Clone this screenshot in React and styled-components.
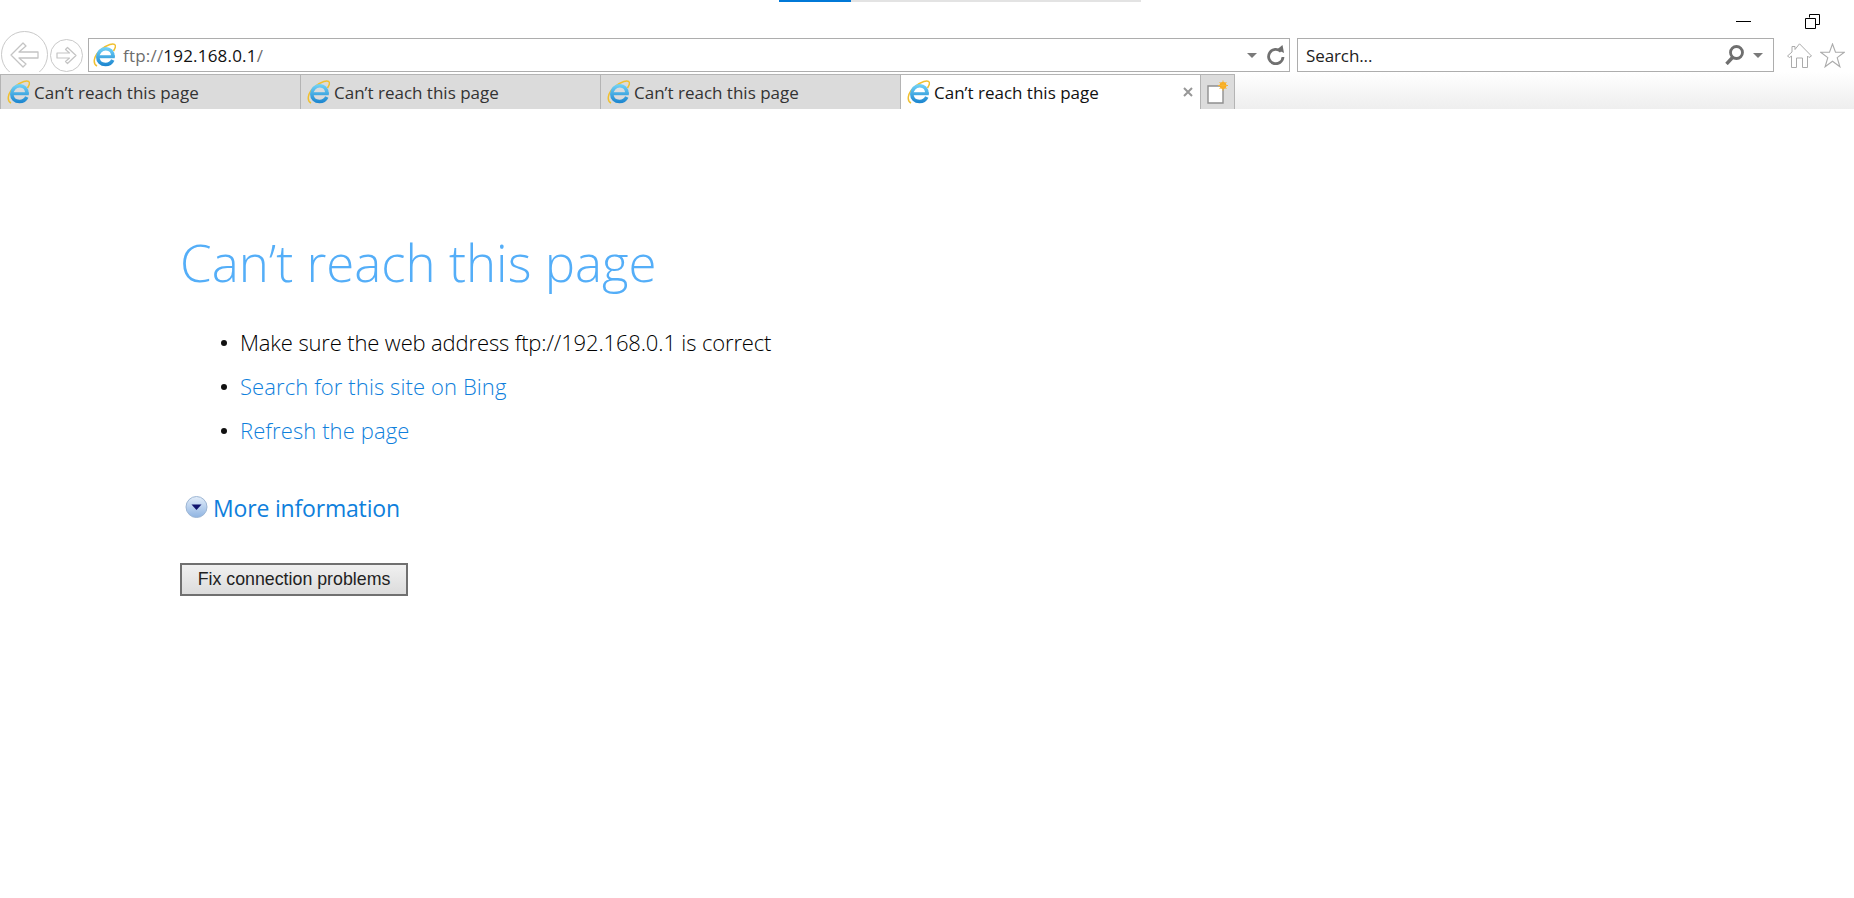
import React from "react";
import styled, { createGlobalStyle } from "styled-components";

const Global = createGlobalStyle`
  html, body { margin: 0; padding: 0; background: #fff; }
  body { font-family: "Open Sans", "Noto Sans", sans-serif; overflow: hidden; }
`;
const Page = styled.div`width: 1854px; height: 898px; display: flex; flex-direction: column; background: #fff;`;
const Progress = styled.div`height: 2px; margin-left: 779px; width: 362px; background: #e3e3e3; flex: none;`;
const ProgressFill = styled.div`height: 100%; width: 72px; background: #0078d7;`;
const WindowBar = styled.div`height: 36px; flex: none; display: flex; justify-content: flex-end; align-items: flex-start; padding-right: 34px; gap: 54px; box-sizing: border-box; padding-top: 12px;`;
const WinButton = styled.svg`width: 15px; height: 15px; display: block; fill: none; stroke: #000; stroke-width: 1;`;
const NavRow = styled.div`height: 34px; flex: none; display: flex; align-items: center; position: relative; z-index: 0;`;
const RoundButton = styled.svg`flex: none; display: block; fill: none;`;
const BackSlot = styled.div`width: 50px; height: 34px; flex: none; display: flex; padding-left: 1px; box-sizing: border-box; align-items: flex-start; overflow: visible;`;
const BackIcon = styled(RoundButton)`margin-top: -7px;`;
const ForwardSlot = styled.div`width: 38px; flex: none; display: flex;`;
const Field = styled.div`
  box-sizing: border-box; height: 34px; flex: none; width: ${p => p.$w}px; margin-right: ${p => p.$mr || 0}px;
  border: 1px solid #adadad; background: #fff; display: flex; align-items: center; padding: 0 ${p => p.$pr || 0}px 0 ${p => p.$pl}px;
`;
const Address = styled.div`font-size: 17px; letter-spacing: 0.2px; color: #6d6d6d; margin-left: 7px; flex: 1; white-space: nowrap;`;
const Host = styled.span`color: #111;`;
const SearchText = styled.div`font-size: 17px; letter-spacing: -0.1px; color: #222; flex: 1;`;
const Caret = styled.span`width: 0; height: 0; border-left: 5px solid transparent; border-right: 5px solid transparent; border-top: 5px solid #7a7a7a; flex: none;`;
const ToolIcon = styled.svg`flex: none; display: block; fill: none;`;
const TabRow = styled.div`height: 37px; flex: none; display: flex; align-items: stretch; position: relative; z-index: 1; background: linear-gradient(#fff, #eeeeee); box-sizing: border-box; padding-top: 2px;`;
const Tab = styled.div`
  box-sizing: border-box; width: 300px; flex: none; display: flex; align-items: center; padding-left: 6px;
  border-top: 1px solid #b4b4b4; border-left: 1px solid #b4b4b4;
  background: ${p => (p.$active ? "#fff" : "#dbdbdb")};
  color: ${p => (p.$active ? "#111" : "#333")};
  position: relative;
`;
const TabTitle = styled.span`font-size: 17px; margin-left: 4px; white-space: nowrap; flex: 1;`;
const Close = styled.svg`width: 10px; height: 10px; margin: 0 7px 0 0; flex: none; stroke: #979797; stroke-width: 2; fill: none;`;
const NewTab = styled.div`
  box-sizing: border-box; width: 35px; flex: none; background: #dcdcdc; border: 1px solid #b4b4b4; border-bottom: 0;
  display: flex; align-items: center; justify-content: center;
`;
const Main = styled.main`flex: 1; padding: 120px 0 0 180px; box-sizing: border-box;`;
const Title = styled.h1`margin: 0; font-size: 51px; font-weight: 300; line-height: 66px; letter-spacing: 0; color: #54aef8;`;
const Tips = styled.ul`list-style: none; margin: 25px 0 0; padding: 0 0 0 60px;`;
const Tip = styled.li`
  font-size: 22px; font-weight: 300; line-height: 44px; height: 44px; letter-spacing: ${p => (p.$link ? "0.1px" : "-0.14px")}; color: ${p => (p.$link ? "#0f7fdc" : "#000")};
  position: relative;
  &::before { content: ""; position: absolute; left: -19px; top: 20px; width: 6px; height: 6px; border-radius: 50%; background: #111; }
`;
const More = styled.div`display: flex; align-items: center; margin: 34px 0 0 5px; height: 44px; gap: 5px;`;
const MoreText = styled.span`font-size: 23px; font-weight: 400; letter-spacing: -0.18px; color: #0f7fdc;`;
const MoreIcon = styled.svg`width: 23px; height: 24px; flex: none; margin-top: -3px;`;
const FixButton = styled.button`
  display: block; box-sizing: border-box; width: 228px; height: 33px; margin-top: 33px; padding: 0;
  border: 2px solid #707070; border-radius: 0; background: linear-gradient(#f0f0f0, #dcdcdc);
  font-family: "Liberation Sans", Arial, sans-serif; font-size: 17.8px; color: #222;
`;

function IeIcon({ id }) {
  return (
    <svg width="23" height="24" viewBox="0 0 23 24" style={{ flex: "none", display: "block" }}>
      <defs>
        <linearGradient id={id} gradientUnits="userSpaceOnUse" x1="0" y1="5" x2="0" y2="23">
          <stop offset="0" stopColor="#6fd0f6" />
          <stop offset="1" stopColor="#1b85cf" />
        </linearGradient>
      </defs>
      <path d="M4 23C-0.5 20.5 0.5 13 7.5 7C14 1.5 21 -0.5 22.3 2.3C23 4 21.8 6 20.5 8" fill="none" stroke="#f0c030" strokeWidth="1.5" />
      <path d="M20 14C20 8.5 16.8 5.8 12.8 5.8C8 5.8 4.8 9.5 4.8 14C4.8 18.5 8 21.5 12.5 21.5C16 21.5 18.5 19.8 19.8 17" fill="none" stroke={`url(#${id})`} strokeWidth="3.6" />
      <path d="M5 12.2H21.8V15.2H5Z" fill={`url(#${id})`} />
    </svg>
  );
}

const tabs = [0, 1, 2, 3];

export default function App() {
  return (
    <Page>
      <Global />
      <Progress><ProgressFill /></Progress>
      <WindowBar>
        <WinButton viewBox="0 0 15 15"><path d="M0 7.5H15" /></WinButton>
        <WinButton viewBox="0 0 15 15"><path d="M4.5 3.5V.5H14.5V10.5H10.5M.5 4.5H10.5V14.5H.5Z" /></WinButton>
      </WindowBar>
      <NavRow>
        <BackSlot>
          <BackIcon width="47" height="47" viewBox="0 0 47 47">
            <circle cx="23.5" cy="23.5" r="23" fill="#fff" stroke="#c9c9c9" />
            <path d="M10 24L22 12L25 15L18 21H37V27H18L25 33L22 36Z" stroke="#c4c4c4" strokeWidth="1.3" strokeLinejoin="round" />
          </BackIcon>
        </BackSlot>
        <ForwardSlot>
          <RoundButton width="33" height="33" viewBox="0 0 33 33">
            <circle cx="16.5" cy="16.5" r="16" fill="#fff" stroke="#c9c9c9" />
            <path d="M26 16.5L17.5 8.5L15.5 10.5L19.5 14H7V19H19.5L15.5 22.5L17.5 24.5Z" stroke="#c4c4c4" strokeWidth="1.2" strokeLinejoin="round" />
          </RoundButton>
        </ForwardSlot>
        <Field $w={1202} $mr={7} $pl={4} $pr={4}>
          <IeIcon id="ie-addr" />
          <Address>ftp://<Host>192.168.0.1</Host>/</Address>
          <Caret />
          <ToolIcon width="18" height="20" viewBox="0 0 18 20" style={{ marginLeft: 10 }}>
            <path d="M14 6.5A7.2 7.2 0 1 0 16 12" stroke="#707070" strokeWidth="2.8" />
            <path d="M10 4.5L15.5 0L17 8Z" fill="#707070" />
          </ToolIcon>
        </Field>
        <Field $w={477} $mr={13} $pl={8} $pr={10}>
          <SearchText>Search...</SearchText>
          <ToolIcon width="19" height="20" viewBox="0 0 19 20" style={{ marginRight: 9 }}>
            <circle cx="11.5" cy="7.5" r="6" stroke="#6f6f6f" strokeWidth="2.8" />
            <path d="M7.5 12.5L1.5 19" stroke="#6f6f6f" strokeWidth="3.4" />
          </ToolIcon>
          <Caret />
        </Field>
        <ToolIcon width="25" height="25" viewBox="0 0 25 25" style={{ marginRight: 8 }}>
          <path d="M.5 13L5 9V3.5H8V6.5L12.5 .8L24.5 13L22 14.5L20.5 13V24.5H15.5V15H9.5V24.5H4.5V13L2.5 14.5Z" stroke="#ababab" strokeWidth="1" />
        </ToolIcon>
        <ToolIcon width="25" height="25" viewBox="0 0 25 25">
          <path d="M12.5 1L15.5 9.3H24.3L17.2 14.6L19.9 23.8L12.5 18.3L5.1 23.8L7.8 14.6L.7 9.3H9.5Z" stroke="#ababab" strokeWidth="1.1" />
        </ToolIcon>
      </NavRow>
      <TabRow>
        {tabs.map(i => (
          <Tab key={i} $active={i === 3}>
            <IeIcon id={`ie-tab-${i}`} />
            <TabTitle>Can’t reach this page</TabTitle>
            {i === 3 && <Close viewBox="0 0 10 10"><path d="M1 1L9 9M9 1L1 9" /></Close>}
          </Tab>
        ))}
        <NewTab>
          <svg width="21" height="24" viewBox="0 0 21 24">
            <path d="M1 6H16V23H1Z" fill="#fff" stroke="#8f8f8f" strokeWidth="1.4" />
            <circle cx="16" cy="5.5" r="3.4" fill="#f7a81b" />
            <path d="M16 .5V10.5M11 5.5H21M12.5 2L19.5 9M19.5 2L12.5 9" stroke="#f9b52e" strokeWidth="1" />
          </svg>
        </NewTab>
      </TabRow>
      <Main>
        <Title>Can’t reach this page</Title>
        <Tips>
          <Tip>Make sure the web address ftp://192.168.0.1 is correct</Tip>
          <Tip $link>Search for this site on Bing</Tip>
          <Tip $link>Refresh the page</Tip>
        </Tips>
        <More>
          <MoreIcon viewBox="0 0 23 24">
            <defs>
              <linearGradient id="more-g" x1="0" y1="0" x2="0" y2="1">
                <stop offset="0" stopColor="#e4eefa" />
                <stop offset="1" stopColor="#8fb4e2" />
              </linearGradient>
            </defs>
            <circle cx="11.5" cy="12" r="10.5" fill="url(#more-g)" stroke="#9db6d4" />
            <path d="M6.5 9.5H16.5L11.5 15Z" fill="#10146e" />
          </MoreIcon>
          <MoreText>More information</MoreText>
        </More>
        <FixButton>Fix connection problems</FixButton>
      </Main>
    </Page>
  );
}
